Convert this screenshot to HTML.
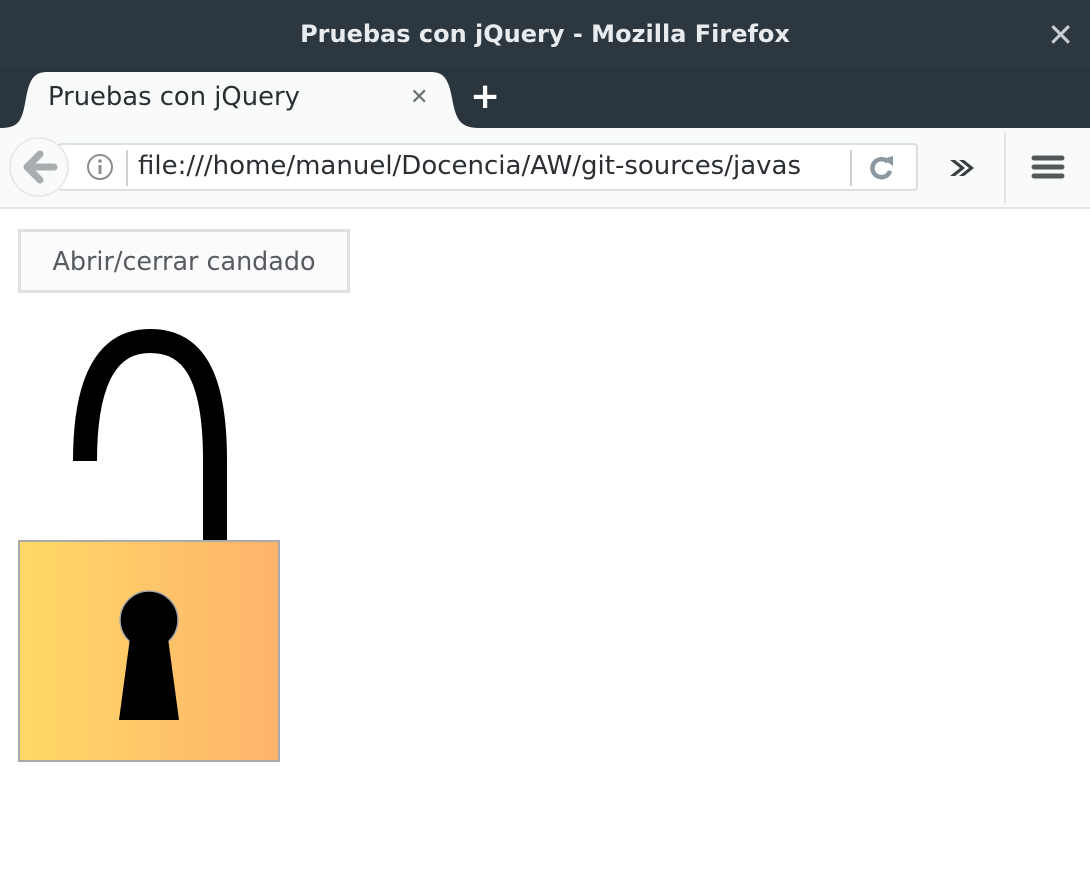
<!DOCTYPE html>
<html><head><meta charset="utf-8"><style>
*{margin:0;padding:0;box-sizing:border-box}
body{width:1090px;height:870px;overflow:hidden;background:#fff;font-family:"DejaVu Sans","Liberation Sans",sans-serif;position:relative}
.title{position:absolute;left:0;top:0;width:1090px;height:68px;background:#2c373f;color:#e8ecef;font-size:24px;font-weight:bold;text-align:center;line-height:68px}
.tabs{position:absolute;left:0;top:68px;width:1090px;height:60px;background:#2a353d}
.nav{position:absolute;left:0;top:128px;width:1090px;height:81px;background:#f9fafa;border-bottom:2px solid #e1e3e4}
</style></head><body>
<div class="title">Pruebas con jQuery - Mozilla Firefox</div>
<div style="position:absolute;right:16px;top:18px;color:#c8cdd1;font-size:32px;line-height:34px">✕</div>
<div class="tabs">
<svg width="480" height="60" style="position:absolute;left:0;top:0"><path d="M0,60 C20,60 22,52 26,30 C30,8 36,4 48,4 L430,4 C442,4 448,8 452,30 C456,52 460,60 480,60 Z" fill="#f9fafa"/></svg>
<div style="position:absolute;left:48px;top:14px;font-size:25.8px;color:#2b2f33">Pruebas con jQuery</div>
<div style="position:absolute;left:410px;top:17px;font-size:22px;color:#6a6e72;font-weight:bold">✕</div>
<div style="position:absolute;left:470px;top:8px;font-size:36px;color:#fff;font-weight:bold">+</div>
</div>
<div class="nav">
<div style="position:absolute;left:58px;top:15px;width:860px;height:48px;border:2px solid #dcdfe1;border-radius:4px;background:#fff"></div>
<div style="position:absolute;left:9px;top:9px;width:60px;height:60px;border-radius:50%;border:2px solid #e8eaeb;background:#f9fafa"></div>
<svg width="40" height="40" style="position:absolute;left:20px;top:20px"><path d="M20,6 L7,19 L20,32 M8,19 L34,19" stroke="#a9adb0" stroke-width="7" fill="none" stroke-linejoin="round" stroke-linecap="round"/></svg>
<svg width="30" height="30" style="position:absolute;left:86px;top:25px"><circle cx="14" cy="14" r="12" stroke="#8a8e92" stroke-width="2" fill="none"/><rect x="12.5" y="12" width="3" height="9" fill="#8a8e92"/><circle cx="14" cy="8" r="1.8" fill="#8a8e92"/></svg>
<div style="position:absolute;left:126px;top:22px;width:2px;height:36px;background:#d0d3d5"></div>
<div style="position:absolute;left:138px;top:23px;font-size:26px;color:#2b2f33;white-space:nowrap">file:///home/manuel/Docencia/AW/git-sources/javas</div>
<div style="position:absolute;left:850px;top:22px;width:2px;height:36px;background:#d0d3d5"></div>
<svg width="30" height="30" style="position:absolute;left:868px;top:25px"><path d="M20,9 A9,9 0 1 0 22,18" stroke="#8d97a0" stroke-width="4.5" fill="none"/><path d="M15,6 L25,3 L25,13 Z" fill="#8d97a0"/></svg>
<svg width="30" height="24" style="position:absolute;left:948px;top:156px;position:fixed"><path d="M2,4 L12,12 L2,20 L7,20 L17,12 L7,4Z M11,4 L21,12 L11,20 L16,20 L26,12 L16,4Z" fill="#3a3d40"/></svg>
<div style="position:absolute;left:1004px;top:4px;width:2px;height:72px;background:#e3e5e6"></div>
<svg width="34" height="30" style="position:absolute;left:1031px;top:25px"><g stroke="#55585b" stroke-width="5" stroke-linecap="round"><path d="M3,5 H31 M3,14 H31 M3,23 H31"/></g></svg>
</div>
<div style="position:absolute;left:18px;top:229px;width:332px;height:64px;border:3px solid #e0e1e2;background:#fbfbfb;font-size:25.4px;color:#555b60;text-align:center;line-height:58px">Abrir/cerrar candado</div>
<svg width="300" height="460" style="position:absolute;left:0;top:310px">
<defs><linearGradient id="g" x1="0" x2="1"><stop offset="0" stop-color="#ffd966"/><stop offset="1" stop-color="#ffb36c"/></linearGradient></defs>
<path d="M85,151 C85,65 110,31 150,31 C193,31 215,65 215,150 L215,231" stroke="#000" stroke-width="24" fill="none"/>
<rect x="19" y="231" width="260" height="220" fill="url(#g)" stroke="#aaa" stroke-width="2"/>
<circle cx="149" cy="310" r="29" fill="#000" stroke="#a8a8a8" stroke-width="1.5"/>
<path d="M130,328 L119,410 L179,410 L168,328 Z" fill="#000"/>
</svg>
</body></html>
